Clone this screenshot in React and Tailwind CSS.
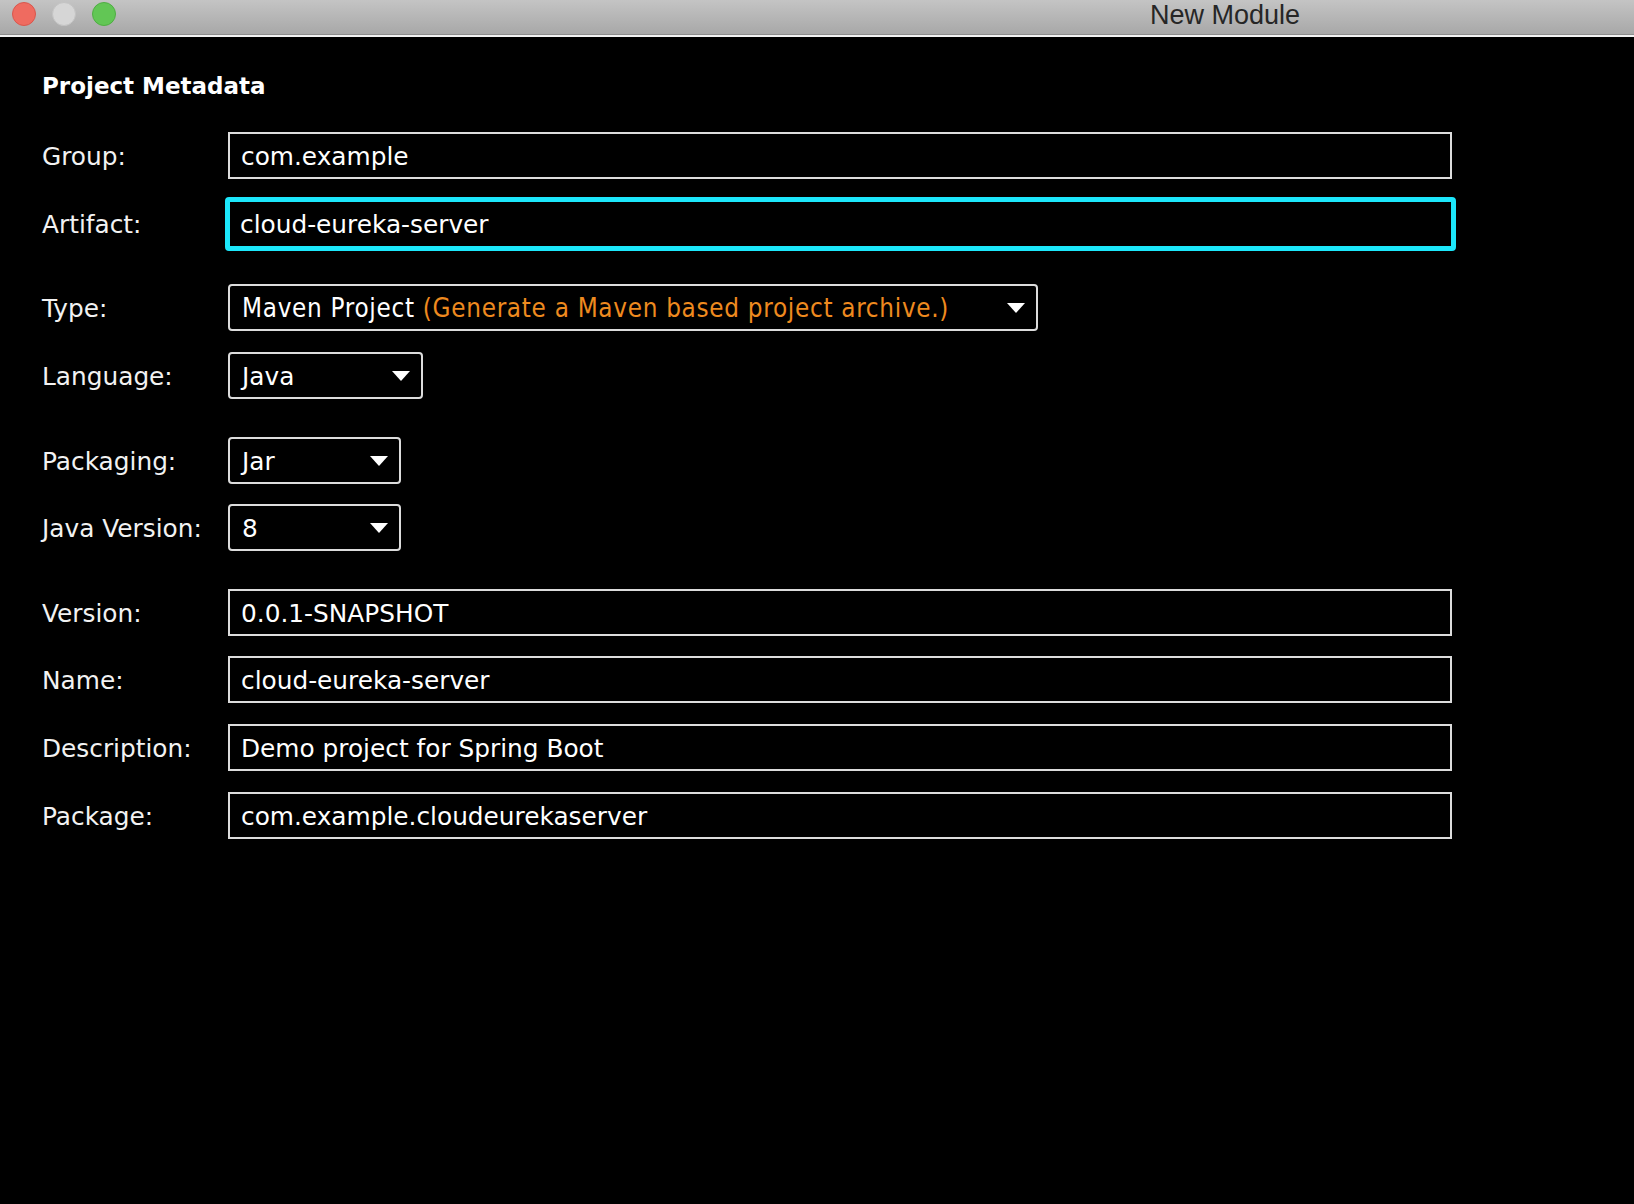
import { useState } from 'react'

const FONT = { fontFamily: '"DejaVu Sans", "Open Sans", sans-serif' }
const CONDENSED = {
  fontFamily: '"DejaVu Sans Condensed", "DejaVu Sans", sans-serif',
  fontStretch: 'condensed',
  letterSpacing: '0.7px',
}

// small white down-pointing triangle used by the combo boxes
function Caret() {
  return (
    <svg width="18" height="10" viewBox="0 0 18 10" className="shrink-0">
      <polygon points="0,0 18,0 9,10" fill="#ffffff" />
    </svg>
  )
}

function Label({ children }) {
  return <div className="w-[228px] shrink-0 pl-[42px] pt-[2px] text-[24.8px] text-[#f2f2f2] whitespace-nowrap">{children}</div>
}

function TextField({ value, focused }) {
  if (focused) {
    return (
      <div className="ml-[-3px] flex h-[54px] w-[1231px] items-center rounded-[4px] border-[5px] border-[#1ce7fb] pl-[10px] pt-[2px] text-[24.8px] text-white">
        {value}
      </div>
    )
  }
  return (
    <div className="flex h-[47px] w-[1224px] items-center border-2 border-[#dcdcdc] pl-[11px] pt-[2px] text-[24.8px] text-white">
      {value}
    </div>
  )
}

function Combo({ width, children, condensed }) {
  return (
    <div
      className="flex h-[47px] items-center justify-between rounded-[4px] border-2 border-[#dcdcdc] pl-[12px] pr-[11px] text-[24.8px] text-white"
      style={{ width }}
    >
      <span
        className={`whitespace-nowrap pt-[2px] ${condensed ? 'text-[25.8px]' : ''}`}
        style={condensed ? CONDENSED : undefined}
      >
        {children}
      </span>
      <Caret />
    </div>
  )
}

function Row({ label, mt, children }) {
  return (
    <div className={`flex items-center ${mt}`}>
      <Label>{label}</Label>
      {children}
    </div>
  )
}

export default function App() {
  const [meta] = useState({
    group: 'com.example',
    artifact: 'cloud-eureka-server',
    version: '0.0.1-SNAPSHOT',
    name: 'cloud-eureka-server',
    description: 'Demo project for Spring Boot',
    pkg: 'com.example.cloudeurekaserver',
  })

  return (
    <div className="min-h-[1204px] w-[1634px] overflow-hidden bg-black" style={FONT}>
      {/* title bar */}
      <div className="relative h-[35px] bg-gradient-to-b from-[#c4c4c4] to-[#a8a8a8] border-b border-[#8e8e8e]">
        <div className="absolute left-[12px] top-[2px] h-[24px] w-[24px] rounded-full bg-[#ef6b60] border border-[#d9574d]" />
        <div className="absolute left-[52px] top-[2px] h-[24px] w-[24px] rounded-full bg-[#d6d6d6] border border-[#c3c3c3]" />
        <div className="absolute left-[92px] top-[2px] h-[24px] w-[24px] rounded-full bg-[#62c655] border border-[#4fae43]" />
        <div
          className="absolute left-[1150px] top-[-1px] text-[27px] leading-[32px] text-[#262626]"
          style={{ fontFamily: '"Liberation Sans", Arial, sans-serif' }}
        >
          New Module
        </div>
      </div>
      <div className="h-[2px] bg-[#f2f2f2]" />

      {/* form */}
      <div className="pt-[34px]">
        <div className="pl-[42px] text-[23px] font-bold leading-[30px] text-white">Project Metadata</div>

        <Row label="Group:" mt="mt-[31px]">
          <TextField value={meta.group} />
        </Row>
        <Row label="Artifact:" mt="mt-[18px]">
          <TextField value={meta.artifact} focused />
        </Row>
        <Row label="Type:" mt="mt-[33px]">
          <Combo width="810px" condensed>
            Maven Project <span className="text-[#ee8a1f]">(Generate a Maven based project archive.)</span>
          </Combo>
        </Row>
        <Row label="Language:" mt="mt-[21px]">
          <Combo width="195px">Java</Combo>
        </Row>
        <Row label="Packaging:" mt="mt-[38px]">
          <Combo width="173px">Jar</Combo>
        </Row>
        <Row label="Java Version:" mt="mt-[20px]">
          <Combo width="173px">8</Combo>
        </Row>
        <Row label="Version:" mt="mt-[38px]">
          <TextField value={meta.version} />
        </Row>
        <Row label="Name:" mt="mt-[20px]">
          <TextField value={meta.name} />
        </Row>
        <Row label="Description:" mt="mt-[21px]">
          <TextField value={meta.description} />
        </Row>
        <Row label="Package:" mt="mt-[21px]">
          <TextField value={meta.pkg} />
        </Row>
      </div>
    </div>
  )
}
